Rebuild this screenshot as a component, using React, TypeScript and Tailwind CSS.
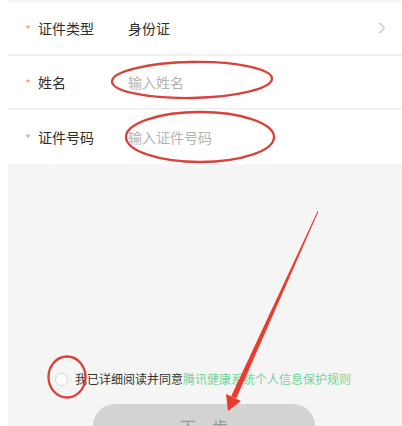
import React from "react";

const font = { fontFamily: '"Noto Sans CJK SC", "Noto Sans", sans-serif' };

function Row({ label, children, border = true }: { label: string; children: React.ReactNode; border?: boolean }) {
  return (
    <div className={`flex h-[54px] shrink-0 items-center bg-white pl-[17px] ${border ? "border-b-2 border-[#f1f1f1]" : ""}`}>
      <span className="w-[13px] text-[13px] leading-none text-[#e9a3a3] pt-[2px]">*</span>
      <span className="w-[90px] text-[14px] text-[#2e2e2e]">{label}</span>
      <div className="flex flex-1 items-center pr-[16px]">{children}</div>
    </div>
  );
}

export default function App() {
  return (
    <div className="relative flex h-[426px] w-[402px] overflow-hidden bg-white" style={font}>
      <div className="w-[8px] shrink-0 bg-white" />
      <div className="flex min-h-0 flex-1 flex-col">
        <div className="h-[2px] shrink-0 bg-[#f5f5f5]" />
        <Row label="证件类型">
          <span className="flex-1 text-[14px] text-[#2e2e2e]">身份证</span>
          <svg width="8" height="12" viewBox="0 0 8 12">
            <polyline points="1.5,1 6.5,6 1.5,11" fill="none" stroke="#c4c4c4" strokeWidth="1.1" />
          </svg>
        </Row>
        <Row label="姓名">
          <span className="text-[14px] text-[#b3b3b3]">输入姓名</span>
        </Row>
        <Row label="证件号码" border={false}>
          <span className="text-[14px] text-[#b3b3b3]">输入证件号码</span>
        </Row>
        <div className="flex min-h-0 flex-1 flex-col overflow-hidden bg-[#f5f5f5] pt-[205px]">
          <div className="flex h-[20px] shrink-0 items-center pl-[47px]">
            <span className="h-[13px] w-[13px] rounded-full border border-[#d6d6d6] bg-white" />
            <span className="ml-[7px] whitespace-nowrap text-[12px] text-[#333333]">
              我已详细阅读并同意<span className="text-[#74d39c]">腾讯健康系统个人信息保护规则</span>
            </span>
          </div>
          <div className="mt-[15px] flex shrink-0 items-start pl-[85px]">
            <div className="flex h-[44px] w-[222px] shrink-0 items-center justify-center rounded-[22px] bg-[#d3d3d3]">
              <span className="text-[16px] text-[#9a9a9a]">下一步</span>
            </div>
            <span className="ml-[28px] mt-[19px] text-[12px] leading-none text-[#d0d0d0]">··</span>
          </div>
        </div>
      </div>

      <svg className="pointer-events-none absolute left-0 top-0" width="402" height="426" viewBox="0 0 402 426">
        <ellipse cx="192" cy="80" rx="80" ry="18" fill="none" stroke="#d8423b" strokeWidth="2.3" transform="rotate(-1 192 80)" />
        <ellipse cx="200" cy="137" rx="74" ry="25" fill="none" stroke="#d8423b" strokeWidth="2.3" />
        <ellipse cx="67" cy="377" rx="18.5" ry="20.5" fill="none" stroke="#d8423b" strokeWidth="2.3" />
        <polygon points="317.6,211 318.4,211.4 236.3,398.5 231.2,396.3" fill="#ea3b2e" />
        <polygon points="226,394 241,401 228,411" fill="#ea3b2e" />
      </svg>
    </div>
  );
}
